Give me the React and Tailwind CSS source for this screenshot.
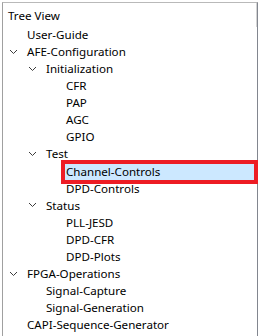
import React from "react";

const Chevron = () => (
  <svg width="9" height="6" viewBox="0 0 9 6" className="block">
    <path d="M1 1 L4.5 4.5 L8 1" fill="none" stroke="#3c3c3c" strokeWidth="1" />
  </svg>
);

const rows = [
  { t: "User-Guide", l: 0 },
  { t: "AFE-Configuration", l: 0, c: true },
  { t: "Initialization", l: 1, c: true },
  { t: "CFR", l: 2 },
  { t: "PAP", l: 2 },
  { t: "AGC", l: 2 },
  { t: "GPIO", l: 2 },
  { t: "Test", l: 1, c: true },
  { t: "Channel-Controls", l: 2, sel: true },
  { t: "DPD-Controls", l: 2 },
  { t: "Status", l: 1, c: true },
  { t: "PLL-JESD", l: 2 },
  { t: "DPD-CFR", l: 2 },
  { t: "DPD-Plots", l: 2 },
  { t: "FPGA-Operations", l: 0, c: true },
  { t: "Signal-Capture", l: 1 },
  { t: "Signal-Generation", l: 1 },
  { t: "CAPI-Sequence-Generator", l: 0 },
];

const pad = ["pl-[5px]", "pl-[24px]", "pl-[44px]"];

export default function App() {
  return (
    <div
      className="w-[259px] h-[336px] bg-white overflow-hidden pl-[2px] pt-[2px] text-[11.6px] text-black"
      style={{ fontFamily: '"Segoe UI", "Noto Sans", sans-serif' }}
    >
      <div className="relative w-[256px] h-[340px] border-t border-l border-r border-t-[#b9b9b9] border-l-[#a0a0a0] border-r-[#82868f]">
        <div className="absolute right-0 top-0 w-px h-[24px] bg-[#d4d4d4]" />
        <div className="pt-[2px] pl-[5px] h-[23px] flex items-center leading-none">Tree View</div>
        <div>
          {rows.map((r, i) => (
            <div key={i} className={`h-[17.1px] flex items-center ${pad[r.l]}`}>
              <div className="w-[19px] h-full flex items-center pl-[1px] shrink-0">
                {r.c && <Chevron />}
              </div>
              {r.sel ? (
                <div className="flex-1 mr-[3px] -ml-[1px] pl-[1px] h-[16px] mt-[1px] flex items-center bg-[#cce8ff] outline-4 outline-[#ed1c24] leading-none whitespace-nowrap">
                  {r.t}
                </div>
              ) : (
                <div className="leading-none whitespace-nowrap">{r.t}</div>
              )}
            </div>
          ))}
        </div>
      </div>
    </div>
  );
}
